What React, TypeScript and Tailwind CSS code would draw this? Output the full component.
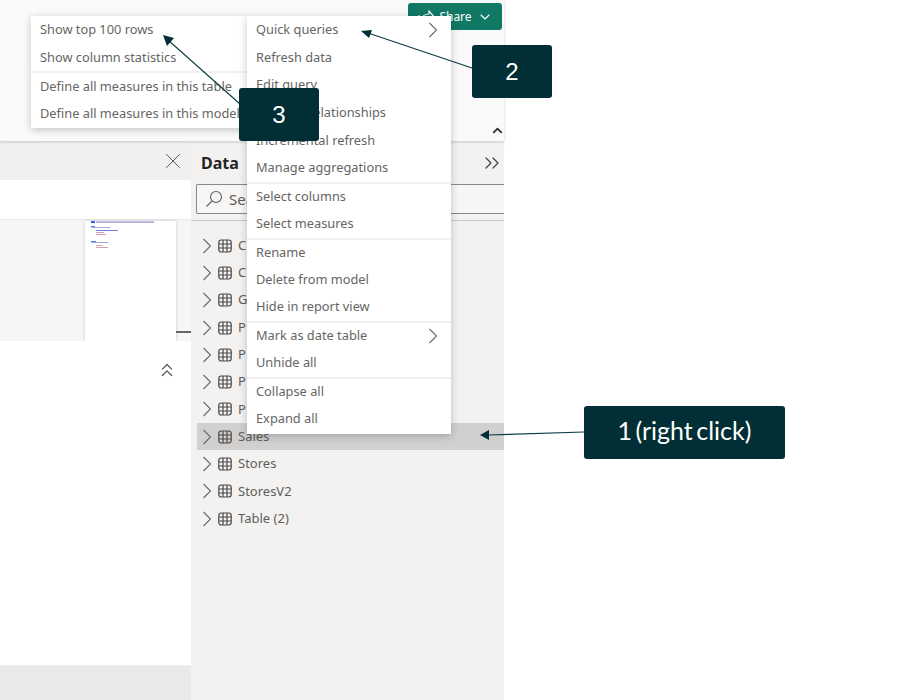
import React from 'react';
import { ChevronDown, ChevronUp, ChevronsRight, ChevronsUp, X } from 'lucide-react';

const tables = ['C', 'C', 'G', 'P', 'P', 'P', 'P', 'Sales', 'Stores', 'StoresV2', 'Table (2)'];

const mainMenu = [
  [{ label: 'Quick queries', arrow: true }, { label: 'Refresh data' }, { label: 'Edit query' }, { label: 'Manage relationships' }, { label: 'Incremental refresh' }, { label: 'Manage aggregations' }],
  [{ label: 'Select columns' }, { label: 'Select measures' }],
  [{ label: 'Rename' }, { label: 'Delete from model' }, { label: 'Hide in report view' }],
  [{ label: 'Mark as date table', arrow: true }, { label: 'Unhide all' }],
  [{ label: 'Collapse all' }, { label: 'Expand all' }],
];

const subMenu = [
  [{ label: 'Show top 100 rows' }, { label: 'Show column statistics' }],
  [{ label: 'Define all measures in this table' }, { label: 'Define all measures in this model' }],
];

type Item = { label: string; arrow?: boolean };

const Chevron = ({ className = '' }: { className?: string }) => (
  <svg width="10" height="16" viewBox="0 0 10 16" fill="none" stroke="#6b6a69" strokeWidth="1.1" className={`shrink-0 ${className}`}>
    <path d="M1.5 1l7 7-7 7" />
  </svg>
);

const Menu = ({ groups, className }: { groups: Item[][]; className: string }) => (
  <div className={`absolute bg-white shadow-[0_2px_8px_rgba(0,0,0,0.22)] pb-[1px] ${className}`}>
    {groups.map((group, i) => (
      <div key={i} className={i > 0 ? 'border-t-2 border-[#f1f0ee]' : ''}>
        {group.map((item) => (
          <div
            key={item.label}
            className={`${i === 0 ? 'h-[27.6px]' : 'h-[27px]'} pl-[9px] pr-[13px] flex items-center justify-between text-[12.8px] whitespace-nowrap text-[#666564]`}
          >
            <span>{item.label}</span>
            {item.arrow && <Chevron />}
          </div>
        ))}
      </div>
    ))}
  </div>
);

const Callout = ({ children, className }: { children: React.ReactNode; className: string }) => (
  <div className={`absolute z-30 bg-[#022f36] rounded-[3px] text-white flex items-center justify-center ${className}`}>
    {children}
  </div>
);

const TableIcon = () => (
  <svg width="14" height="14" viewBox="0 0 14 14" fill="none" stroke="#4a4948" strokeWidth="1.2" className="shrink-0">
    <rect x="0.8" y="1" width="12.4" height="12" rx="2.4" />
    <path d="M0.8 5h12.4M0.8 9h12.4M5 1v12M9 1v12" />
  </svg>
);

export default function App() {
  return (
    <div className="relative w-[909px] h-[700px] bg-white overflow-hidden font-['Noto_Sans',sans-serif]">
      <div className="w-[504px] h-[700px] flex flex-col">
        {/* Ribbon */}
        <div className="relative h-[141px] bg-[#fafafa] shadow-[0_1px_3px_rgba(0,0,0,0.18)] z-10">
          <div className="absolute right-[2px] top-[3px] w-[94px] h-[27px] rounded-[3px] bg-[#117865] text-white text-[12px] flex items-center justify-center gap-[5px]">
            <svg width="17" height="16" viewBox="0 0 17 16" fill="none" stroke="white" strokeWidth="1.2">
              <path d="M2 6v8h10" />
              <path d="M5 11c0-4 3-6 7-6V2l4 4.5L12 11V8c-3 0-5 1-7 3z" />
            </svg>
            <span>Share</span>
            <ChevronDown className="h-[16px] w-[16px]" strokeWidth={1.6} />
          </div>
          <ChevronUp className="absolute right-[-1px] top-[123px] h-[15px] w-[15px] text-[#333]" strokeWidth={3} />
        </div>

        <div className="flex flex-1 min-h-0">
          {/* Report side */}
          <div className="w-[191px] flex flex-col">
            <div className="h-[39px] bg-[#f0f0f0] flex items-center justify-end pr-[5px]">
              <X className="h-[26px] w-[26px] text-[#555]" strokeWidth={0.9} />
            </div>
            <div className="h-[40px] bg-white border-b border-[#e8e8e8]" />
            <div className="h-[121px] bg-[#f6f6f6] flex justify-end items-end">
              <div className="w-[91px] h-[120px] bg-white shadow-[0_0_3px_rgba(0,0,0,0.2)] mr-[15px] shrink-0">
                <svg width="91" height="40" viewBox="0 0 91 40" className="blur-[0.4px]">
                  <rect x="6" y="0" width="4" height="2" fill="#3a5fe0" />
                  <rect x="11" y="0.5" width="58" height="1.2" fill="#8a8ad0" />
                  <rect x="6" y="5" width="4" height="1.5" fill="#5a78e0" />
                  <rect x="9" y="6" width="16" height="1" fill="#a0a8d8" />
                  <rect x="11" y="9" width="22" height="1" fill="#7080d8" />
                  <rect x="11" y="11" width="8" height="1" fill="#d8a0a8" />
                  <rect x="11" y="13" width="10" height="1" fill="#d8a0a8" />
                  <rect x="6" y="20" width="5" height="1.5" fill="#5a78e0" />
                  <rect x="9" y="21" width="14" height="1" fill="#a0a8d8" />
                  <rect x="11" y="24" width="6" height="1" fill="#d8a0a8" />
                  <rect x="11" y="26" width="12" height="1" fill="#d8a0a8" />
                </svg>
              </div>
              <div className="w-[15px] h-[2px] bg-[#666] mb-[8px] -ml-[15px] shrink-0" />
            </div>
            <div className="flex-1 bg-white flex justify-end pt-[18px] pr-[13px]">
              <ChevronsUp className="h-[22px] w-[22px] text-[#555]" strokeWidth={1.4} />
            </div>
            <div className="h-[35px] bg-[#e9e9e9] border-t border-[#efefef]" />
          </div>

          {/* Data pane */}
          <div className="flex-1 bg-[#f3f2f1] flex flex-col">
            <div className="h-[43px] pl-[10px] pt-[1px] flex items-center justify-between">
              <span className="text-[16px] font-bold text-[#252423]">Data</span>
              <ChevronsRight className="h-[24px] w-[24px] text-[#444]" strokeWidth={1.3} />
            </div>
            <div className="ml-[5px] h-[30px] border border-[#8a8886] border-r-0 rounded-l-[2px] bg-[#f7f6f5] flex items-center pl-[8px] gap-[6px] text-[15px] text-[#605e5c]">
              <svg width="18" height="18" viewBox="0 0 18 18" fill="none" stroke="#605e5c" strokeWidth="1.1">
                <circle cx="11" cy="7" r="5.5" />
                <path d="M7 11l-5.5 5.5" />
              </svg>
              <span>Search</span>
            </div>
            <div className="mt-[6px] border-t border-[#c8c6c4] pt-[11px]">
              {tables.map((name, i) => (
                <div
                  key={i}
                  className={`h-[27.3px] ml-[6px] pl-[5px] flex items-center text-[13px] text-[#605e5c] ${name === 'Sales' ? 'bg-[#d2d0ce]' : ''}`}
                >
                  <Chevron />
                  <span className="ml-[6px]"><TableIcon /></span>
                  <span className="ml-[6px]">{name}</span>
                </div>
              ))}
            </div>
          </div>
        </div>
      </div>

      <Menu groups={subMenu} className="z-20 left-[31px] top-[16px] w-[217px]" />
      <Menu groups={mainMenu} className="z-20 left-[247px] top-[16px] w-[204px]" />

      {/* Callout arrows */}
      <svg width="909" height="700" viewBox="0 0 909 700" className="absolute inset-0 z-30 pointer-events-none">
        <path d="M240 104L168 40" stroke="#0b3c44" strokeWidth="1.2" />
        <path d="M163 35l11 3-7 8z" fill="#022f36" />
        <path d="M472 68L368 33" stroke="#0b3c44" strokeWidth="1.2" />
        <path d="M361 31l11-1-3 8z" fill="#022f36" />
        <path d="M584 432L488 435" stroke="#0b3c44" strokeWidth="1.2" />
        <path d="M480 435l9-5v10z" fill="#022f36" />
      </svg>

      <Callout className="left-[239px] top-[88px] w-[80px] h-[53px] text-[24px] font-['Liberation_Sans',sans-serif]">3</Callout>
      <Callout className="left-[472px] top-[45px] w-[80px] h-[53px] text-[24px] font-['Liberation_Sans',sans-serif]">2</Callout>
      <Callout className="left-[584px] top-[406px] w-[201px] h-[53px] pb-[3px] text-[25px] font-['Lato',sans-serif] [word-spacing:-3px]">1 (right click)</Callout>
    </div>
  );
}
